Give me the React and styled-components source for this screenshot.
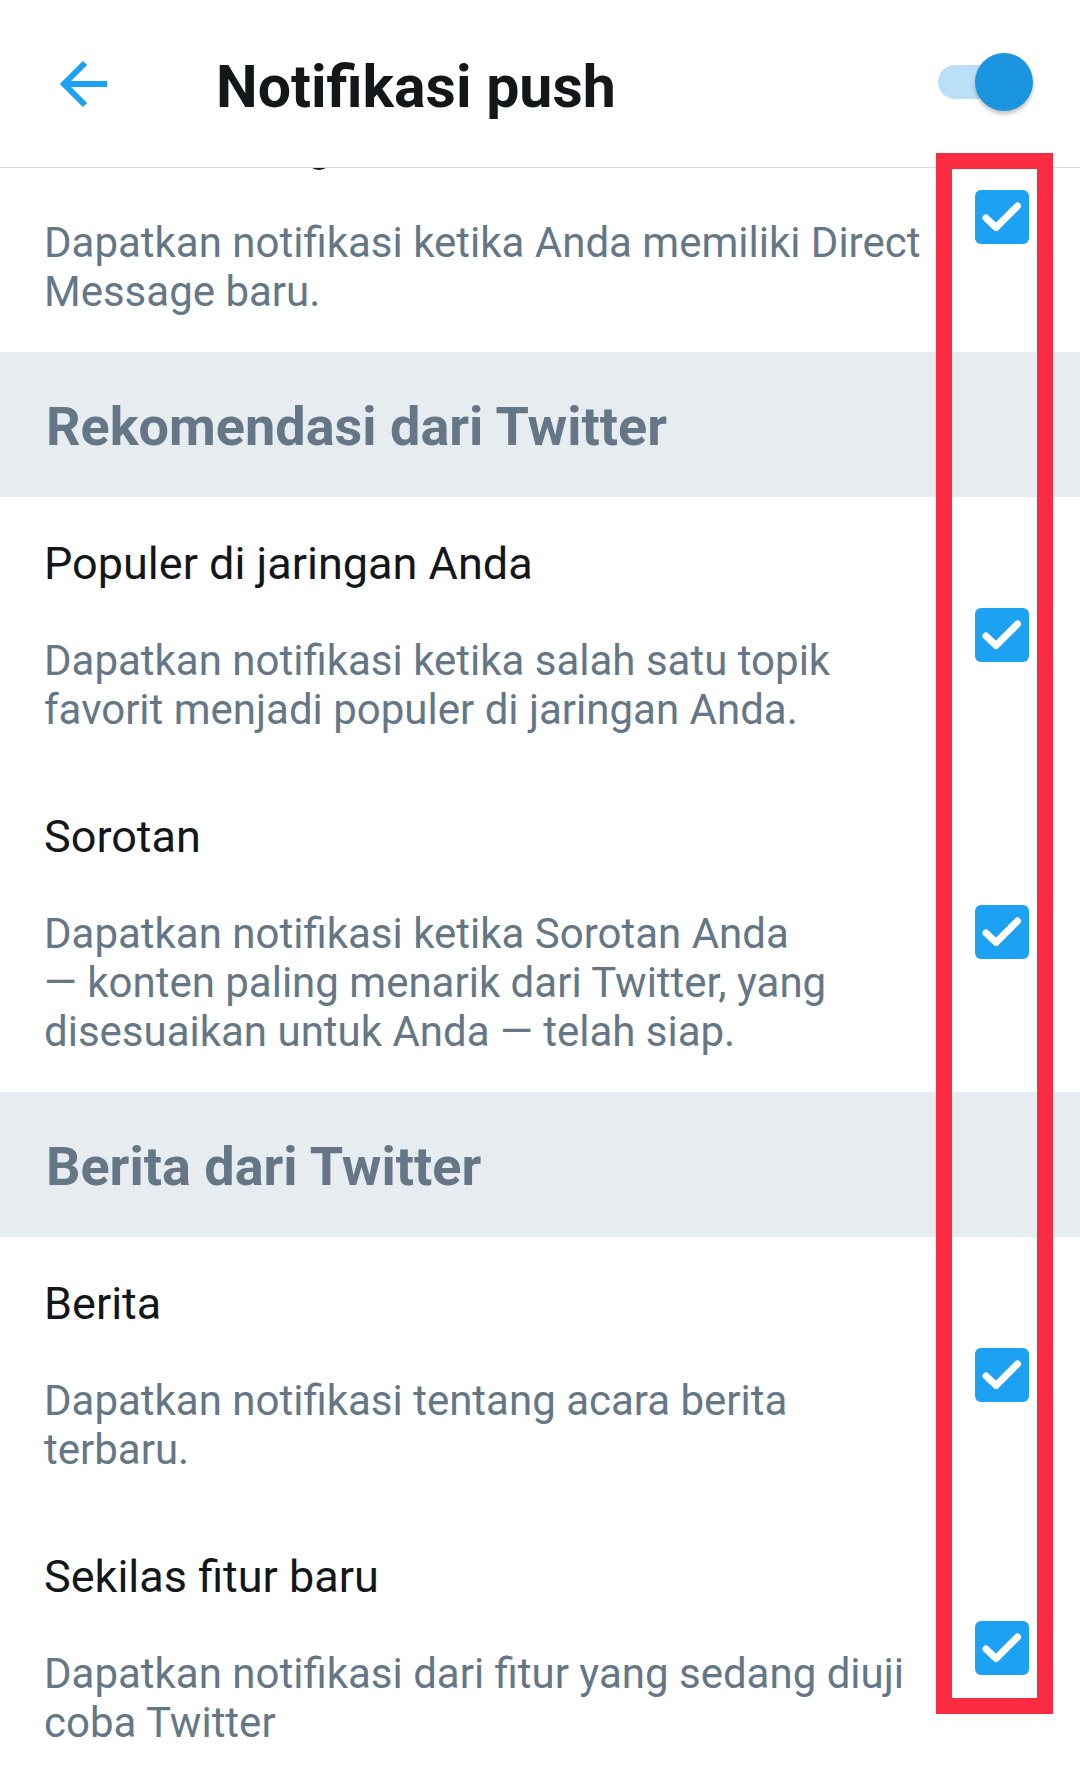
import React from 'react';
import styled, { createGlobalStyle } from 'styled-components';

const GlobalStyle = createGlobalStyle`
  html, body {
    margin: 0;
    padding: 0;
    background: #ffffff;
  }
  body {
    font-family: Roboto, "Noto Sans", "Liberation Sans", sans-serif;
    -webkit-font-smoothing: antialiased;
  }
`

const Screen = styled.div`
  position: relative;
  width: 1080px;
  height: 1781px;
  overflow: hidden;
  background: #ffffff;
  display: flex;
  flex-direction: column;
`

const Header = styled.header`
  position: relative;
  z-index: 2;
  height: 167px;
  display: flex;
  align-items: center;
  padding: 0 47px 0 60px;
  background: #ffffff;
  border-bottom: 1px solid #d3dbe0;
  flex-shrink: 0;
`

const BackButton = styled.button`
  display: flex;
  align-items: center;
  justify-content: center;
  width: 48px;
  height: 48px;
  padding: 0;
  margin: 0 108px 0 0;
  border: none;
  background: none;
  color: #1da1f2;
`

const Title = styled.h1`
  flex: 1;
  margin: 6px 0 0;
  font-size: 59px;
  font-weight: 700;
  color: #14171a;
  letter-spacing: 0;
`

const Switch = styled.div`
  position: relative;
  width: 95px;
  height: 58px;
  margin-top: -4px;
  &::before {
    content: '';
    position: absolute;
    left: 0;
    top: 12px;
    width: 84px;
    height: 34px;
    border-radius: 17px;
    background: #bcdff8;
  }
`

const Thumb = styled.span`
  position: absolute;
  right: 0;
  top: 0;
  width: 58px;
  height: 58px;
  border-radius: 50%;
  background: #1b95e0;
  box-shadow: 0 3px 4px rgba(0, 0, 0, 0.25);
`

const ScrollArea = styled.main`
  flex: 1;
  overflow: hidden;
`

const List = styled.div`
  margin-top: -89px;
  display: flex;
  flex-direction: column;
`

const SectionHeader = styled.div`
  height: 145px;
  display: flex;
  align-items: center;
  padding: 4px 46px 0;
  box-sizing: border-box;
  background: #e6ecf0;
  color: #657786;
  font-size: 54px;
  font-weight: 700;
`

const Row = styled.div`
  display: flex;
  align-items: center;
  padding: 42px 51px 36px 44px;
`

const RowText = styled.div`
  flex: 1;
  display: flex;
  flex-direction: column;
  gap: 48px;
  font-size: 42px;
  line-height: 49px;
`

const RowTitle = styled.div`
  color: #14171a;
  font-size: 45px;
`

const RowDescription = styled.div`
  color: #657786;
  white-space: nowrap;
`

const CheckBox = styled.span`
  flex-shrink: 0;
  width: 54px;
  height: 54px;
  margin-top: -4px;
  border-radius: 6px;
  background: ${(props) => (props.checked ? '#1da1f2' : '#ffffff')};
  display: flex;
  align-items: center;
  justify-content: center;
`

const Highlight = styled.div`
  position: absolute;
  z-index: 3;
  left: 936px;
  top: 153px;
  width: 117px;
  height: 1561px;
  box-sizing: border-box;
  border: 16px solid #fb2c41;
  pointer-events: none;
`

const sections = [
  {
    rows: [
      {
        title: 'Direct Message',
        lines: ['Dapatkan notifikasi ketika Anda memiliki Direct', 'Message baru.'],
      },
    ],
  },
  {
    heading: 'Rekomendasi dari Twitter',
    rows: [
      {
        title: 'Populer di jaringan Anda',
        lines: ['Dapatkan notifikasi ketika salah satu topik', 'favorit menjadi populer di jaringan Anda.'],
      },
      {
        title: 'Sorotan',
        lines: [
          'Dapatkan notifikasi ketika Sorotan Anda',
          '— konten paling menarik dari Twitter, yang',
          'disesuaikan untuk Anda — telah siap.',
        ],
      },
    ],
  },
  {
    heading: 'Berita dari Twitter',
    rows: [
      {
        title: 'Berita',
        lines: ['Dapatkan notifikasi tentang acara berita', 'terbaru.'],
      },
      {
        title: 'Sekilas fitur baru',
        lines: ['Dapatkan notifikasi dari fitur yang sedang diuji', 'coba Twitter'],
      },
    ],
  },
];

const BackArrow = () => (
  <svg width="48" height="48" viewBox="0 0 48 48" fill="none" stroke="currentColor" strokeWidth="6" strokeLinecap="butt" strokeLinejoin="miter">
    <path d="M47 24H5" />
    <path d="M25 3L4 24l21 21" />
  </svg>
);

const Check = () => (
  <svg width="54" height="54" viewBox="0 0 54 54" fill="none" stroke="#ffffff" strokeWidth="7" strokeLinecap="round" strokeLinejoin="round">
    <path d="M11 28l10 9.5L42.5 16" />
  </svg>
);

const SettingRow = ({ row }) => (
  <Row>
    <RowText>
      <RowTitle>{row.title}</RowTitle>
      <RowDescription>
        {row.lines.map((line, i) => (
          <React.Fragment key={i}>
            {i > 0 && <br />}
            {line}
          </React.Fragment>
        ))}
      </RowDescription>
    </RowText>
    <CheckBox checked>
      <Check />
    </CheckBox>
  </Row>
);

const App = () => {
  return (
    <>
      <GlobalStyle />
      <Screen>
        <Header>
          <BackButton aria-label="Kembali">
            <BackArrow />
          </BackButton>
          <Title>Notifikasi push</Title>
          <Switch role="switch" aria-checked="true">
            <Thumb />
          </Switch>
        </Header>
        <ScrollArea>
          <List>
            {sections.map((section, i) => (
              <React.Fragment key={i}>
                {section.heading && <SectionHeader>{section.heading}</SectionHeader>}
                {section.rows.map((row) => (
                  <SettingRow key={row.title} row={row} />
                ))}
              </React.Fragment>
            ))}
          </List>
        </ScrollArea>
        <Highlight />
      </Screen>
    </>
  );
};

export default App;
